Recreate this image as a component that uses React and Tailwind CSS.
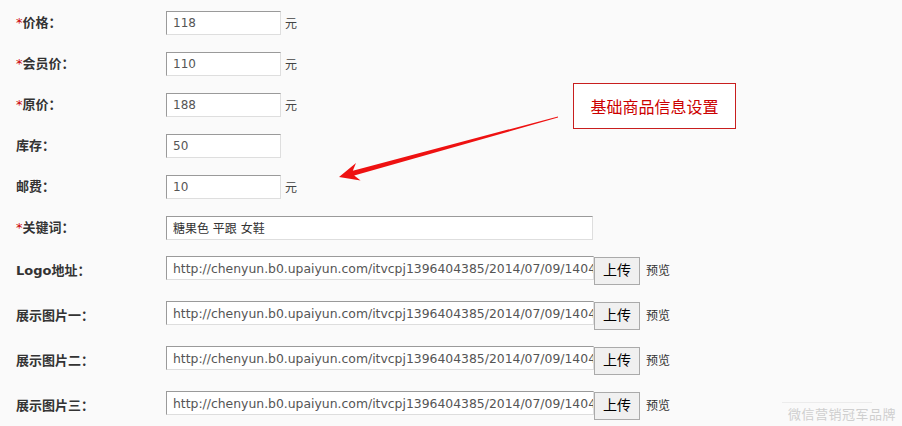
const fieldFont = "font-['DejaVu_Sans','Noto_Sans_CJK_SC',sans-serif]";

const priceRows = [
  { label: "价格：", value: "118", required: true, unit: true },
  { label: "会员价：", value: "110", required: true, unit: true },
  { label: "原价：", value: "188", required: true, unit: true },
  { label: "库存：", value: "50", required: false, unit: false },
  { label: "邮费：", value: "10", required: false, unit: true },
];

const url = "http://chenyun.b0.upaiyun.com/itvcpj1396404385/2014/07/09/1404880000123.jpg";

const imageRows = ["Logo地址：", "展示图片一：", "展示图片二：", "展示图片三："];

function Label({ text, required }) {
  return (
    <div className={`w-[150px] shrink-0 text-[13px] font-bold text-[#333] ${fieldFont}`}>
      {required && <span className="font-normal text-[#c00]">*</span>}
      {text}
    </div>
  );
}

function TextBox({ value, className = "" }) {
  return (
    <input
      readOnly
      value={value}
      className={`h-[24px] border border-t-[#9a9a9a] border-l-[#9a9a9a] border-r-[#dedede] border-b-[#dedede] bg-white pl-[6px] text-[12px] text-[#555] outline-none ${fieldFont} ${className}`}
    />
  );
}

export default function App() {
  return (
    <div className="relative h-[426px] w-[902px] overflow-hidden bg-[#fafafa] pl-[16px] pt-[2px]">
      {priceRows.map((r, i) => (
        <div key={i} className="flex h-[41px] items-center">
          <Label text={r.label} required={r.required} />
          <TextBox value={r.value} className="w-[115px]" />
          {r.unit && (
            <span className={`ml-[4px] mt-[3px] text-[12px] text-[#444] ${fieldFont}`}>元</span>
          )}
        </div>
      ))}

      <div className="flex h-[41px] items-center">
        <Label text="关键词：" required />
        <TextBox value="糖果色 平跟 女鞋" className="w-[427px] !text-[#333]" />
      </div>

      {imageRows.map((label, i) => (
        <div key={i} className="flex h-[45px] items-center">
          <Label text={label} />
          <TextBox value={url} className="mb-[5px] w-[428px] !text-[12.4px]" />
          <button className={`h-[28px] w-[46px] border border-[#aaa] bg-[#f0f0f0] text-[14px] text-black ${fieldFont}`}>
            上传
          </button>
          <span className={`ml-[6px] text-[12px] text-[#333] ${fieldFont}`}>预览</span>
        </div>
      ))}

      {/* callout annotation */}
      <div className="absolute left-[573px] top-[83px] flex h-[46px] w-[163px] items-center justify-center border border-[#c81e1e] bg-white font-['Noto_Sans_CJK_SC',sans-serif] text-[16px] text-[#c00]">
        基础商品信息设置
      </div>

      <svg className="pointer-events-none absolute left-0 top-0" width="902" height="426">
        <polygon
          points="558,116.4 352.8,170.7 356,163.1 339,177 360.6,180.5 354.2,175.5 558,117.6"
          fill="#ee1111"
        />
      </svg>

      {/* watermark */}
      <div className="absolute left-[782px] top-[402px] h-px w-[90px] bg-[#ececec]" />
      <div className="absolute left-[788px] top-[404px] font-['Noto_Sans_CJK_SC',sans-serif] text-[13px] tracking-[0.5px] text-[#cfcfcf]">
        微信营销冠军品牌
      </div>
    </div>
  );
}
